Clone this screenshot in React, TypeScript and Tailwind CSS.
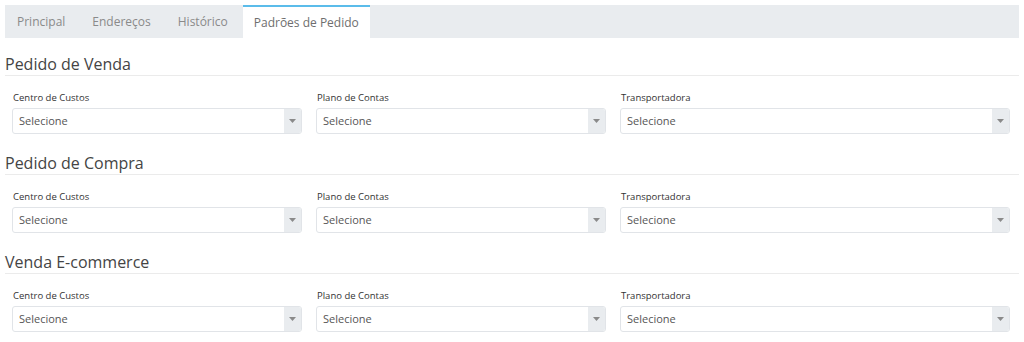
import React from "react";

const tabs = ["Principal", "Endereços", "Histórico", "Padrões de Pedido"];
const sections = ["Pedido de Venda", "Pedido de Compra", "Venda E-commerce"];

const fields = [
  { label: "Centro de Custos", w: "w-[290px]" },
  { label: "Plano de Contas", w: "w-[290px]" },
  { label: "Transportadora", w: "w-[390px]" },
];

function SelectBox({ width }: { width: string }) {
  return (
    <div
      className={`${width} h-[26px] flex items-stretch bg-white border border-[#e1e4e8] rounded-[3px] overflow-hidden`}
    >
      <div className="flex-1 flex items-center pl-[6px] text-[11px] text-[#555]">
        Selecione
      </div>
      <div className="w-[17px] bg-[#e9ecef] flex items-center justify-center">
        <svg width="7" height="4" viewBox="0 0 7 4">
          <path d="M0 0 L7 0 L3.5 4 Z" fill="#8a8a8a" />
        </svg>
      </div>
    </div>
  );
}

export default function App() {
  return (
    <div
      className="w-[1024px] h-[342px] bg-white pt-[5px] px-[5px] overflow-hidden"
      style={{ fontFamily: "'Open Sans', 'Liberation Sans', sans-serif" }}
    >
      {/* tabs */}
      <div className="h-[33px] bg-[#e9ecef] flex gap-[3px]">
        {tabs.map((t, i) => {
          const active = i === tabs.length - 1;
          return (
            <div
              key={t}
              className={
                active
                  ? "px-[11px] flex items-center bg-white border-t-2 border-[#5bbcea] text-[12px] text-[#6e6e6e]"
                  : "px-[12px] flex items-center text-[12px] text-[#8a8a8a]"
              }
            >
              {t}
            </div>
          );
        })}
      </div>

      {sections.map((s, idx) => (
        <div key={s} className={idx === 0 ? "mt-[15px]" : "mt-[18px]"}>
          <h3 className="h-[23px] leading-[22px] text-[16px] text-[#444] border-b border-[#ebebeb]">
            {s}
          </h3>
          <div className="mt-[15px] pl-[7px] flex gap-[14px]">
            {fields.map((f) => (
              <div key={f.label} className="flex flex-col">
                <label className="h-[13px] leading-[13px] text-[9.5px] text-[#333] mb-[4px] pl-[1px]">
                  {f.label}
                </label>
                <SelectBox width={f.w} />
              </div>
            ))}
          </div>
        </div>
      ))}
    </div>
  );
}
